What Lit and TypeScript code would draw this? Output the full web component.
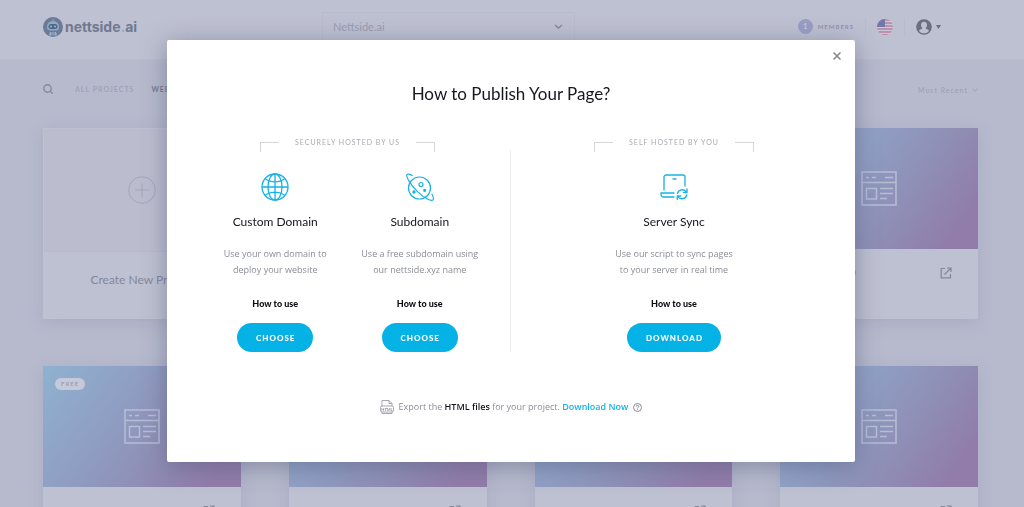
import { LitElement, html, css, svg, nothing } from "lit";
import { customElement, property } from "lit/decorators.js";

const globe = svg`<svg width="28" height="28" viewBox="0 0 28 28" fill="none" stroke="currentColor" stroke-width="1.3">
  <circle cx="14" cy="14" r="13"/><ellipse cx="14" cy="14" rx="7" ry="13"/>
  <path d="M14 1v26M1 14h26M4 5.500c5.500 4.500 14.500 4.500 20 0M4 22.500c5.500-4.500 14.500-4.500 20 0"/></svg>`;

const planet = svg`<svg width="28" height="28" viewBox="0 0 28 28" fill="none" stroke="currentColor" stroke-width="1.200" stroke-linecap="round">
  <circle cx="13.500" cy="15" r="11"/>
  <path d="M6.200 2.600C3.600.8 1.600.6 1 1.600-.3 4 4.500 11.500 11.500 18.600c7 7 14 10 15.500 8.200.9-1.200.3-3.200-1-5.600"/>
  <circle cx="15" cy="11.500" r="2"/><circle cx="8" cy="19" r="1.100" fill="currentColor"/><circle cx="18.700" cy="17.300" r="1" fill="currentColor"/></svg>`;

const sync = svg`<svg width="28" height="28" viewBox="0 0 28 28" fill="none" stroke="currentColor" stroke-width="1.300" stroke-linecap="round" stroke-linejoin="round">
  <path d="M4 17V4a2 2 0 0 1 2-2h17a2 2 0 0 1 2 2v9M13 6h3M14 20H1v1.500A2.500 2.500 0 0 0 3.500 24H14"/>
  <path d="M17.500 20.500a5 5 0 0 1 9-1.500M27 16v3.500h-3.500M26.800 22a5 5 0 0 1-9 1.500M17.300 26.500V23h3.500"/></svg>`;

const layout = svg`<svg width="36" height="36" viewBox="0 0 36 36" fill="none" stroke="currentColor" stroke-width="1.500">
  <rect x="1" y="1" width="34" height="33"/><path d="M1 11.500h34"/>
  <path d="M5 6.500h3M11 6.500h4M24 6.500h8"/><rect x="5.500" y="17.500" width="10" height="10.500"/>
  <path d="M19 17.500h13M19 22.500h13M19 27.500h7"/></svg>`;

const external = svg`<svg width="12" height="12" viewBox="0 0 12 12" fill="none" stroke="currentColor" stroke-width="1.200">
  <path d="M5 1.500H1.200v9.300h9.300V7M7 1h4v4M11 1 4.500 7.500"/></svg>`;

const robot = svg`<svg width="20" height="20" viewBox="0 0 20 20">
  <circle cx="10" cy="10" r="10" fill="#6b7a96"/>
  <path d="M4 9.500a6 5.500 0 0 1 12 0v1a3 3 0 0 1-3 3H7a3 3 0 0 1-3-3z" fill="#8eabc6"/>
  <rect x="5.500" y="7" width="9" height="5" rx="2.500" fill="#566581"/>
  <circle cx="8" cy="9.500" r="1.100" fill="#86b4d2"/><circle cx="12" cy="9.500" r="1.100" fill="#86b4d2"/>
  <path d="M10 2v2" stroke="#8eabc6"/><path d="M6 18.500l1-3.500h6l1 3.500" fill="#9fb4ca"/>
  <path d="M9 15v4M11 15v4" stroke="#6b7a96"/></svg>`;

const flag = svg`<svg width="16" height="16" viewBox="0 0 16 16">
  <defs><clipPath id="disc"><circle cx="8" cy="8" r="8"/></clipPath></defs>
  <g clip-path="url(#disc)"><rect width="16" height="16" fill="#c9c8d8"/>
  <path d="M0 1h16M0 4h16M0 7h16M0 10h16M0 13h16M0 15.700h16" stroke="#b87f9f" stroke-width="1.400"/>
  <rect width="8" height="8" fill="#7378aa"/></g></svg>`;

const person = svg`<svg width="16" height="16" viewBox="0 0 16 16">
  <circle cx="8" cy="8" r="7.800" fill="#6c6e81"/>
  <path d="M8 2.800c2 0 3 1.400 3 3.100 0 1.300-.5 2.500-1.400 3.100.1 1 1.600 1.100 2.900 1.900.5.300.4 1 0 1.500a6.300 6.300 0 0 1-9 0c-.4-.5-.5-1.200 0-1.500 1.300-.8 2.800-.9 2.900-1.900C5.500 8.400 5 7.200 5 5.900c0-1.700 1-3.100 3-3.100z" fill="#bec1d1"/></svg>`;

@customElement("project-card")
export class ProjectCard extends LitElement {
  @property() name = "";
  @property() badge = "";

  static styles = css`
    :host { display: block; background: #bec1d1; box-shadow: 0 4px 14px rgba(120, 125, 165, 0.22); }
    .cover {
      position: relative; display: grid; place-items: center; height: 121px; color: #b8bdd6;
      background: linear-gradient(125deg, #8fb2d0 0%, #8f9dc2 38%, #8f8cb4 66%, #917caa 88%, #917caa 100%);
    }
    .badge {
      position: absolute; top: 12px; left: 12px; padding: 0 6px; border-radius: 6px;
      background: #c6c9d9; color: #9da0b6; font-size: 6px; line-height: 12px; font-weight: 700; letter-spacing: 1px;
    }
    .foot { display: flex; align-items: center; justify-content: space-between; height: 22px; padding: 13px 26px 35px 29px; color: #85879b; }
    .name { font-size: 12px; }
    .open { display: grid; color: inherit; }
    svg { display: block; }
  `;

  render() {
    return html`
      <div class="cover">${this.badge ? html`<span class="badge">${this.badge}</span>` : nothing}${layout}</div>
      <div class="foot"><span class="name">${this.name}</span><a class="open" href="#" aria-label="Open project">${external}</a></div>
    `;
  }
}

@customElement("publish-option")
export class PublishOption extends LitElement {
  @property({ attribute: false }) icon: unknown = nothing;
  @property() name = "";
  @property({ attribute: false }) lines: string[] = [];
  @property() action = "";

  static styles = css`
    :host { display: flex; flex-direction: column; align-items: center; text-align: center; line-height: 16px; }
    svg { display: block; }
    .icon { color: #16b2e4; height: 28px; }
    h3 { margin: 13px 0 0; font-size: 12px; font-weight: 400; color: #15171f; }
    p { margin: 16px 0 0; font-family: "Open Sans", sans-serif; font-size: 9px; color: #8b8d97; white-space: nowrap; }
    a { margin-top: 18px; font-size: 9px; font-weight: 900; color: #0c0d12; text-decoration: none; }
    button {
      margin-top: 11px; height: 29px; padding: 0 18px 0 19px; border: 0; border-radius: 15px;
      background: #05b2e6; color: #fff; font: 900 8px Lato, sans-serif; letter-spacing: 1px; cursor: pointer;
    }
  `;

  render() {
    return html`
      <span class="icon">${this.icon}</span>
      <h3>${this.name}</h3>
      <p>${this.lines[0]}<br />${this.lines[1]}</p>
      <a href="#">How to use</a>
      <button type="button">${this.action}</button>
    `;
  }
}

@customElement("app-root")
export class AppRoot extends LitElement {
  static styles = css`
    :host { display: block; height: 100vh; overflow: hidden; background: #b7bacd; font-family: Lato, sans-serif; color: #85879b; }
    * { box-sizing: border-box; }
    svg { display: block; }
    button { padding: 0; border: 0; background: none; color: inherit; font: inherit; }
    select { appearance: none; border: 0; background: none; font: inherit; color: inherit; }
    .header {
      display: grid; grid-template-columns: 279fr 253fr 366fr; align-items: center; height: 59px;
      padding: 0 83px 6px 43px; background: #bec1d1;
    }
    .logo { display: flex; align-items: center; gap: 2px; color: #70798f; font: 700 14px Inter, sans-serif; text-decoration: none; }
    .logo i { font-style: normal; color: #8fa9c6; }
    .site { display: grid; align-items: center; height: 30px; border: 1px solid #b9bccf; border-radius: 2px; font-size: 11px; color: #9a9cb3; }
    .site > *, .sort > * { grid-area: 1 / 1; }
    .site select { width: 100%; padding: 0 10px; }
    .site svg { justify-self: end; margin-right: 11px; pointer-events: none; color: #85879b; }
    .user { display: flex; align-items: center; justify-content: flex-end; }
    .members { display: flex; align-items: center; gap: 5px; font-size: 6px; font-weight: 700; letter-spacing: 1px; color: #9194b0; }
    .count { width: 15px; height: 15px; border-radius: 50%; background: #9a9ec6; color: #c5c8dc; font-size: 7px; line-height: 15px; text-align: center; letter-spacing: 0; }
    .rule { width: 1px; height: 17px; background: #b8bbce; margin: 0 11px; }
    .account { display: flex; align-items: center; gap: 4px; }
    .content { padding: 0 46px 0 43px; }
    .filters { display: flex; align-items: center; height: 69px; padding-bottom: 10px; font-size: 7px; font-weight: 700; letter-spacing: 1px; }
    .filters a { color: #a0a2bb; text-decoration: none; margin-left: 17px; }
    .filters a.on { color: #777a90; }
    .filters .search + a { margin-left: 22px; }
    .sort { display: grid; align-items: center; margin-left: auto; padding-top: 2px; color: #9b9db4; font-weight: 400; }
    .sort select { padding: 0 10px 0 0; letter-spacing: inherit; }
    .sort svg { justify-self: end; pointer-events: none; }
    .grid { display: grid; grid-template-columns: repeat(4, 1fr); gap: 47px 48px; }
    .create {
      display: grid; grid-template-rows: 122px 67px; place-items: center; width: 100%;
      background: #bbbdcf; border: 1px solid #bfc1d2; box-shadow: 0 4px 14px rgba(120, 125, 165, 0.22); font-size: 12px;
    }
    .create .plus { color: #a3a5ba; }
    .create .label { display: grid; align-items: center; width: 100%; height: 100%; padding-bottom: 12px; border-top: 1px solid #b8bacd; background: #bec1d1; }

    .overlay { position: fixed; inset: 0; display: flex; justify-content: center; align-items: flex-start; padding: 40px 2px 0 0; }
    .dialog {
      position: relative; width: 100%; max-width: 688px; padding: 42px 0 47px; border-radius: 2px; background: #fff;
      box-shadow: 0 4px 24px rgba(80, 84, 120, 0.5);
    }
    .close { position: absolute; top: 12px; right: 14px; color: #85868d; }
    h2 { margin: 0; font-size: 17px; line-height: 24px; font-weight: 400; color: #15171f; text-align: center; }
    .groups { display: grid; grid-template-columns: 307fr 1px 326fr; margin-top: 28px; padding: 0 18px 0 36px; }
    .hosted { padding-right: 18px; }
    .divider { margin-top: 16px; background: #ececee; }
    .legend { display: flex; justify-content: center; gap: 16px; height: 16px; line-height: 16px; font-size: 7px; letter-spacing: 1px; color: #a9aab2; }
    .legend::before, .legend::after { content: ""; width: 18px; height: 9px; margin-top: 8px; border: solid #d4d5d9; border-width: 1px 0 0 1px; }
    .legend::after { border-width: 1px 1px 0 0; }
    .options { display: flex; margin-top: 23px; }
    .options publish-option { flex: 1; }
    .export {
      display: flex; align-items: center; justify-content: center; gap: 5px; margin-top: 47px;
      line-height: 16px; font-family: "Open Sans", sans-serif; font-size: 9px; color: #8b8d97;
    }
    .export b { color: #15171f; font-weight: 600; }
    .export a { color: #14b4e6; font-weight: 600; text-decoration: none; }
    .help { color: #7d7e87; }
    .file { font: 700 4px Lato, sans-serif; }
  `;

  private chevron(size = 9) {
    return html`<svg width=${size} height=${size} viewBox="0 0 9 9" fill="none" stroke="currentColor" stroke-width="1.400"><path d="M1 3l3.500 3L8 3"/></svg>`;
  }

  render() {
    return html`
      <header class="header">
        <a class="logo" href="#">${robot}<span>nettside<i>.</i>ai</span></a>
        <label class="site">
          <select aria-label="Site"><option>Nettside.ai</option></select>${this.chevron()}
        </label>
        <div class="user">
          <span class="members"><span class="count">1</span>MEMBERS</span>
          <span class="rule"></span>
          <button type="button" aria-label="Language">${flag}</button>
          <span class="rule"></span>
          <button class="account" type="button" aria-label="Account">
            ${person}<svg width="5" height="4" viewBox="0 0 5 4"><path d="M0 0h5L2.500 4z" fill="#6c6e81"/></svg>
          </button>
        </div>
      </header>

      <main class="content">
        <nav class="filters">
          <button class="search" type="button" aria-label="Search">
            <svg width="10" height="10" viewBox="0 0 10 10" fill="none" stroke="currentColor" stroke-width="1.400"><circle cx="4.500" cy="4.500" r="3.700"/><path d="M7.200 7.200l2.500 2.500"/></svg>
          </button>
          <a href="#">ALL PROJECTS</a>
          <a class="on" href="#">WEBSITES</a>
          <label class="sort"><select aria-label="Sort by"><option>Most Recent</option></select>${this.chevron(6)}</label>
        </nav>
        <section class="grid">
          <button class="create" type="button">
            <svg class="plus" width="28" height="28" viewBox="0 0 28 28" fill="none" stroke="currentColor"><circle cx="14" cy="14" r="13.300"/><path d="M14 7v14M7 14h14"/></svg>
            <span class="label">Create New Project</span>
          </button>
          <project-card name="Project 7"></project-card>
          <project-card name="Project 8"></project-card>
          <project-card name="Project 9"></project-card>
          <project-card name="Project 6" badge="FREE"></project-card>
          <project-card name="Project 5"></project-card>
          <project-card name="Project 4"></project-card>
          <project-card name="Project 3"></project-card>
        </section>
      </main>

      <div class="overlay">
        <section class="dialog" role="dialog" aria-modal="true" aria-labelledby="title">
          <button class="close" type="button" aria-label="Close">
            <svg width="8" height="8" viewBox="0 0 8 8" fill="none" stroke="currentColor" stroke-width="1.500"><path d="M.5.5l7 7M7.500.5l-7 7"/></svg>
          </button>
          <h2 id="title">How to Publish Your Page?</h2>
          <div class="groups">
            <div class="hosted">
              <div class="legend">SECURELY HOSTED BY US</div>
              <div class="options">
                <publish-option .icon=${globe} name="Custom Domain" .lines=${["Use your own domain to", "deploy your website"]} action="CHOOSE"></publish-option>
                <publish-option .icon=${planet} name="Subdomain" .lines=${["Use a free subdomain using", "our nettside.xyz name"]} action="CHOOSE"></publish-option>
              </div>
            </div>
            <span class="divider"></span>
            <div>
              <div class="legend">SELF HOSTED BY YOU</div>
              <div class="options">
                <publish-option .icon=${sync} name="Server Sync" .lines=${["Use our script to sync pages", "to your server in real time"]} action="DOWNLOAD"></publish-option>
              </div>
            </div>
          </div>
          <div class="export">
            <svg class="file" width="14" height="14" viewBox="0 0 14 14" fill="none" stroke="#9d9ea8" stroke-width=".9">
              <path d="M2 6V.5h7L12 3.500V6M9 .5v3h3M2 12v1.500h10V12"/><rect x=".5" y="6" width="13" height="6" rx="1.500"/>
              <text x="7" y="10.500" text-anchor="middle" fill="#8b8d97" stroke="none">HTML</text>
            </svg>
            <span>Export the <b>HTML files</b> for your project. <a href="#">Download Now</a></span>
            <button class="help" type="button" aria-label="Help">
              <svg width="9" height="9" viewBox="0 0 9 9" fill="none" stroke="currentColor" stroke-width=".9"><circle cx="4.500" cy="4.500" r="4"/><path d="M3.200 3.600c0-1.700 2.600-1.700 2.600 0 0 .9-1.300.9-1.300 1.900M4.500 6.300v.8"/></svg>
            </button>
          </div>
        </section>
      </div>
    `;
  }
}
